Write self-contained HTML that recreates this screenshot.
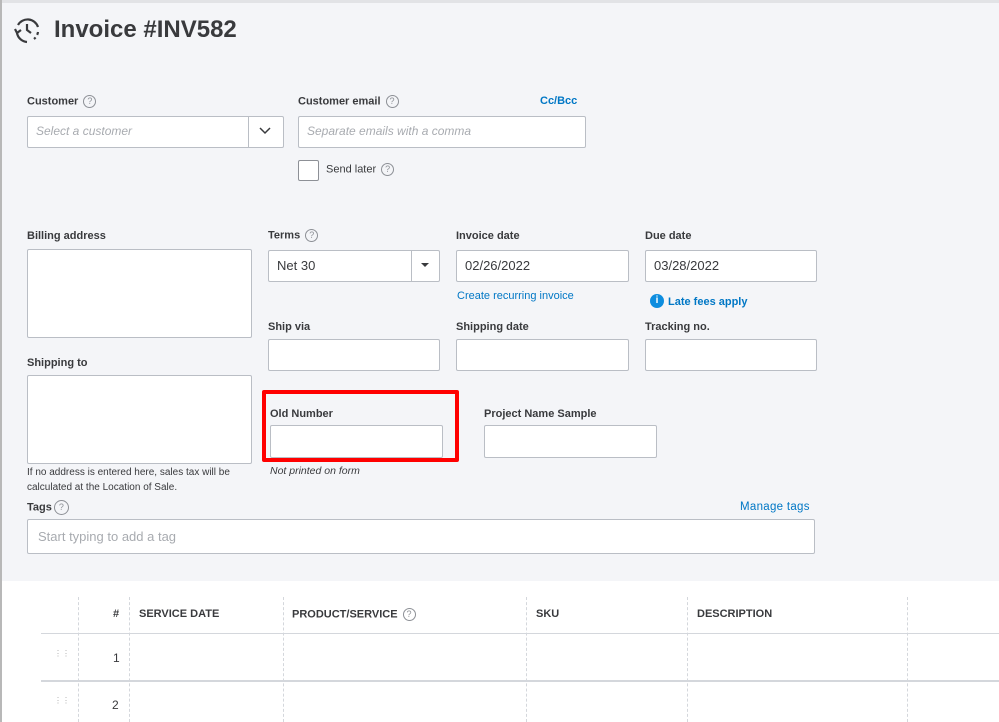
<!DOCTYPE html>
<html><head><meta charset="utf-8">
<style>
*{box-sizing:border-box;margin:0;padding:0}
body{width:999px;height:722px;overflow:hidden;background:#fff;font-family:"Liberation Sans",sans-serif;color:#393a3d;position:relative}
#top{position:absolute;left:0;top:0;width:999px;height:581px;background:#f4f5f8;border-top:3px solid #e2e3e6}
#lb{position:absolute;left:0;top:0;width:2px;height:722px;background:#b8b8b8}
.a{position:absolute}
.lbl{position:absolute;font-size:11px;font-weight:bold;color:#393a3d;white-space:nowrap}
.box{position:absolute;background:#fff;border:1px solid #babec5;border-radius:2px}
.ph{position:absolute;font-size:12px;font-style:italic;color:#a8abb0;white-space:nowrap}
.val{position:absolute;font-size:13px;color:#393a3d}
.q{display:inline-block;width:13px;height:13px;border:1px solid #8d9096;border-radius:50%;font-size:9px;line-height:11px;text-align:center;color:#8d9096;font-weight:normal;vertical-align:middle;margin-left:5px}
.link{position:absolute;font-size:11px;color:#0077c5;white-space:nowrap}
.vl{position:absolute;top:597px;width:0;height:125px;border-left:1px dashed #d4d7dc}
.hd{position:absolute;top:608px;font-size:11px;font-weight:bold;color:#393a3d}
</style></head><body>
<div id="top"></div>
<div id="lb"></div>
<svg class="a" style="left:12px;top:15px" width="30" height="30" viewBox="0 0 30 30" fill="none" stroke="#393a3d" stroke-width="2.2">
<path d="M6 10 A11 11 0 0 1 26 12"/><path d="M26 17 A11 11 0 0 1 22 24" stroke-dasharray="3 3"/><path d="M15 27 A11 11 0 0 1 5 18"/><path d="M3 14 L5 18 L9 15"/><path d="M15 9 V15 L19 18"/></svg>
<div class="a" style="left:54px;top:16px;font-size:24px;font-weight:bold;color:#393a3d">Invoice #INV582</div>

<div class="lbl" style="left:27px;top:95px">Customer<span class="q">?</span></div>
<div class="box" style="left:27px;top:116px;width:257px;height:32px"></div>
<div class="a" style="left:248px;top:117px;width:1px;height:30px;background:#babec5"></div>
<svg class="a" style="left:259px;top:127px" width="12" height="8"><path d="M1 1 L6 6 L11 1" stroke="#393a3d" stroke-width="1.5" fill="none"/></svg>
<div class="ph" style="left:36px;top:124px">Select a customer</div>

<div class="lbl" style="left:298px;top:95px">Customer email<span class="q">?</span></div>
<div class="link" style="left:540px;top:95px;font-weight:bold">Cc/Bcc</div>
<div class="box" style="left:298px;top:116px;width:288px;height:32px"></div>
<div class="ph" style="left:307px;top:124px">Separate emails with a comma</div>
<div class="box" style="left:298px;top:160px;width:21px;height:21px;border-color:#8d9096"></div>
<div class="lbl" style="left:326px;top:163px;font-weight:normal">Send later<span class="q">?</span></div>

<div class="lbl" style="left:27px;top:230px">Billing address</div>
<div class="box" style="left:27px;top:249px;width:225px;height:89px"></div>
<div class="lbl" style="left:27px;top:357px">Shipping to</div>
<div class="box" style="left:27px;top:375px;width:225px;height:89px"></div>
<div class="a" style="left:27px;top:465px;font-size:10px;line-height:15px;color:#393a3d;width:240px">If no address is entered here, sales tax will be calculated at the Location of Sale.</div>

<div class="lbl" style="left:268px;top:229px">Terms<span class="q">?</span></div>
<div class="box" style="left:268px;top:250px;width:172px;height:32px"></div>
<div class="a" style="left:411px;top:251px;width:1px;height:30px;background:#babec5"></div>
<svg class="a" style="left:421px;top:263px" width="8" height="5"><path d="M0 0 L8 0 L4 4Z" fill="#393a3d"/></svg>
<div class="val" style="left:277px;top:258px">Net 30</div>

<div class="lbl" style="left:456px;top:230px">Invoice date</div>
<div class="box" style="left:456px;top:250px;width:173px;height:32px"></div>
<div class="val" style="left:465px;top:258px">02/26/2022</div>
<div class="link" style="left:457px;top:290px">Create recurring invoice</div>

<div class="lbl" style="left:645px;top:230px">Due date</div>
<div class="box" style="left:645px;top:250px;width:172px;height:32px"></div>
<div class="val" style="left:654px;top:258px">03/28/2022</div>
<div class="a" style="left:650px;top:294px;width:14px;height:14px;border-radius:50%;background:#0d8ddf;color:#fff;font-size:10px;line-height:14px;text-align:center;font-weight:bold">i</div>
<div class="link" style="left:668px;top:296px;font-weight:bold">Late fees apply</div>

<div class="lbl" style="left:268px;top:321px">Ship via</div>
<div class="box" style="left:268px;top:339px;width:172px;height:32px"></div>
<div class="lbl" style="left:456px;top:321px">Shipping date</div>
<div class="box" style="left:456px;top:339px;width:173px;height:32px"></div>
<div class="lbl" style="left:645px;top:321px">Tracking no.</div>
<div class="box" style="left:645px;top:339px;width:172px;height:32px"></div>

<div class="lbl" style="left:270px;top:408px">Old Number</div>
<div class="box" style="left:270px;top:425px;width:173px;height:33px"></div>
<div class="a" style="left:262px;top:390px;width:197px;height:72px;border:4px solid #f00;border-radius:2px"></div>
<div class="a" style="left:270px;top:465px;font-size:10.5px;font-style:italic;color:#393a3d">Not printed on form</div>
<div class="lbl" style="left:484px;top:408px">Project Name Sample</div>
<div class="box" style="left:484px;top:425px;width:173px;height:33px"></div>

<div class="lbl" style="left:27px;top:500px">Tags<span class="q" style="margin-left:2px;width:15px;height:15px;line-height:13px">?</span></div>
<div class="link" style="left:740px;top:501px;font-size:11.5px;letter-spacing:0.3px">Manage tags</div>
<div class="box" style="left:27px;top:519px;width:788px;height:35px"></div>
<div class="a" style="left:38px;top:529px;font-size:13px;color:#a8abb0">Start typing to add a tag</div>

<div class="a" style="left:41px;top:633px;width:958px;height:1px;background:#d4d7dc"></div>
<div class="a" style="left:41px;top:680px;width:958px;height:2px;background:#d4d7dc"></div>
<div class="vl" style="left:78px"></div>
<div class="vl" style="left:129px"></div>
<div class="vl" style="left:283px"></div>
<div class="vl" style="left:526px"></div>
<div class="vl" style="left:687px"></div>
<div class="vl" style="left:907px"></div>
<div class="hd" style="left:113px">#</div>
<div class="hd" style="left:139px">SERVICE DATE</div>
<div class="hd" style="left:292px">PRODUCT/SERVICE<span class="q">?</span></div>
<div class="hd" style="left:536px">SKU</div>
<div class="hd" style="left:697px">DESCRIPTION</div>
<div class="a" style="left:113px;top:651px;font-size:12px">1</div>
<div class="a" style="left:112px;top:698px;font-size:12px">2</div>
<div class="a" style="left:54px;top:652px;font-size:8px;color:#aaa;line-height:4px">⋮⋮<br></div>
<div class="a" style="left:54px;top:699px;font-size:8px;color:#aaa;line-height:4px">⋮⋮<br></div>
</body></html>
